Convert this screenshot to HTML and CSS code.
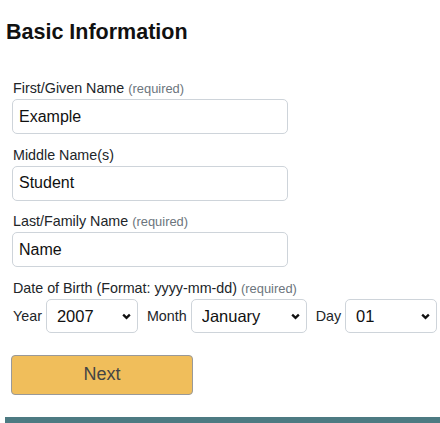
FILE: index.html
```html
<!DOCTYPE html>
<html lang="en">
<head>
<meta charset="utf-8">
<title>Basic Information</title>
<link rel="stylesheet" href="styles.css">
</head>
<body>
<h2 class="title">Basic Information</h2>
<form class="form">
  <div class="field">
    <label class="label">First/Given Name <span class="req">(required)</span></label>
    <input class="input" type="text" value="Example">
  </div>
  <div class="field">
    <label class="label">Middle Name(s)</label>
    <input class="input" type="text" value="Student">
  </div>
  <div class="field">
    <label class="label">Last/Family Name <span class="req">(required)</span></label>
    <input class="input" type="text" value="Name">
  </div>
  <div class="field">
    <span class="label">Date of Birth (Format: yyyy-mm-dd) <span class="req">(required)</span></span>
    <div class="dob">
      <label class="dob-lbl">Year</label>
      <span class="sel-wrap sel-year">
        <select class="select"><option>2007</option></select>
        <svg class="chev" viewBox="0 0 10 7" width="9" height="7"><path d="M1.3 1.5 L5 5 L8.7 1.5" fill="none" stroke="#111" stroke-width="2.6"/></svg>
      </span>
      <label class="dob-lbl">Month</label>
      <span class="sel-wrap sel-month">
        <select class="select"><option>January</option></select>
        <svg class="chev" viewBox="0 0 10 7" width="9" height="7"><path d="M1.3 1.5 L5 5 L8.7 1.5" fill="none" stroke="#111" stroke-width="2.6"/></svg>
      </span>
      <label class="dob-lbl">Day</label>
      <span class="sel-wrap sel-day">
        <select class="select"><option>01</option></select>
        <svg class="chev" viewBox="0 0 10 7" width="9" height="7"><path d="M1.3 1.5 L5 5 L8.7 1.5" fill="none" stroke="#111" stroke-width="2.6"/></svg>
      </span>
    </div>
  </div>
  <button class="btn" type="button">Next</button>
</form>
<div class="bar"></div>
</body>
</html>
```

FILE: styles.css
```css
html, body {
  margin: 0;
  padding: 0;
  background: #fff;
}
body {
  font-family: "Liberation Sans", Arial, sans-serif;
  color: #212529;
}
.title {
  margin: 18.5px 0 35.5px 6px;
  font-size: 21.5px;
  line-height: 26px;
  font-weight: bold;
  color: #111;
}
.form {
  margin: 0;
  padding-left: 12px;
}
.field {
  margin-bottom: 12.5px;
}
.label {
  display: block;
  height: 17px;
  overflow: visible;
  padding-left: 1px;
  font-size: 14.3px;
  line-height: 17px;
  margin-bottom: 2px;
  color: #212529;
}
.req {
  font-size: 12.9px;
  line-height: 1;
  color: #6c757d;
}
.input {
  display: block;
  box-sizing: border-box;
  width: 276px;
  height: 35px;
  margin: 0;
  padding: 0 6px;
  border: 1px solid #ced4da;
  border-radius: 5px;
  font-family: "Liberation Sans", Arial, sans-serif;
  font-size: 16px;
  color: #111;
  background: #fff;
}
.dob {
  display: flex;
  align-items: center;
  height: 34px;
  padding-top: 0.5px;
}
.dob-lbl {
  padding-left: 1px;
  font-size: 14.3px;
  line-height: 17px;
  margin-right: 4px;
  color: #212529;
}
.sel-wrap {
  position: relative;
  display: block;
  margin-right: 8px;
}
.sel-year { width: 92px; }
.sel-month { width: 116px; }
.sel-day { width: 92px; margin-right: 0; }
.select {
  -webkit-appearance: none;
  appearance: none;
  display: block;
  box-sizing: border-box;
  width: 100%;
  height: 34px;
  margin: 0;
  padding: 0 20px 0 10px;
  border: 1px solid #ced4da;
  border-radius: 5px;
  background: #fff;
  font-family: "Liberation Sans", Arial, sans-serif;
  font-size: 16.5px;
  color: #111;
}
.chev {
  position: absolute;
  right: 7px;
  top: 13.5px;
  pointer-events: none;
}
.btn {
  display: block;
  box-sizing: border-box;
  width: 182px;
  height: 40px;
  margin: 21.5px 0 0 -1px;
  padding: 0;
  border: 1px solid #999;
  border-radius: 4px;
  background: #f0be5b;
  font-family: "Liberation Sans", Arial, sans-serif;
  font-size: 18px;
  color: #454545;
}
.bar {
  margin: 22px 0 0 5px;
  height: 6px;
  background: #4d7a82;
}
```
